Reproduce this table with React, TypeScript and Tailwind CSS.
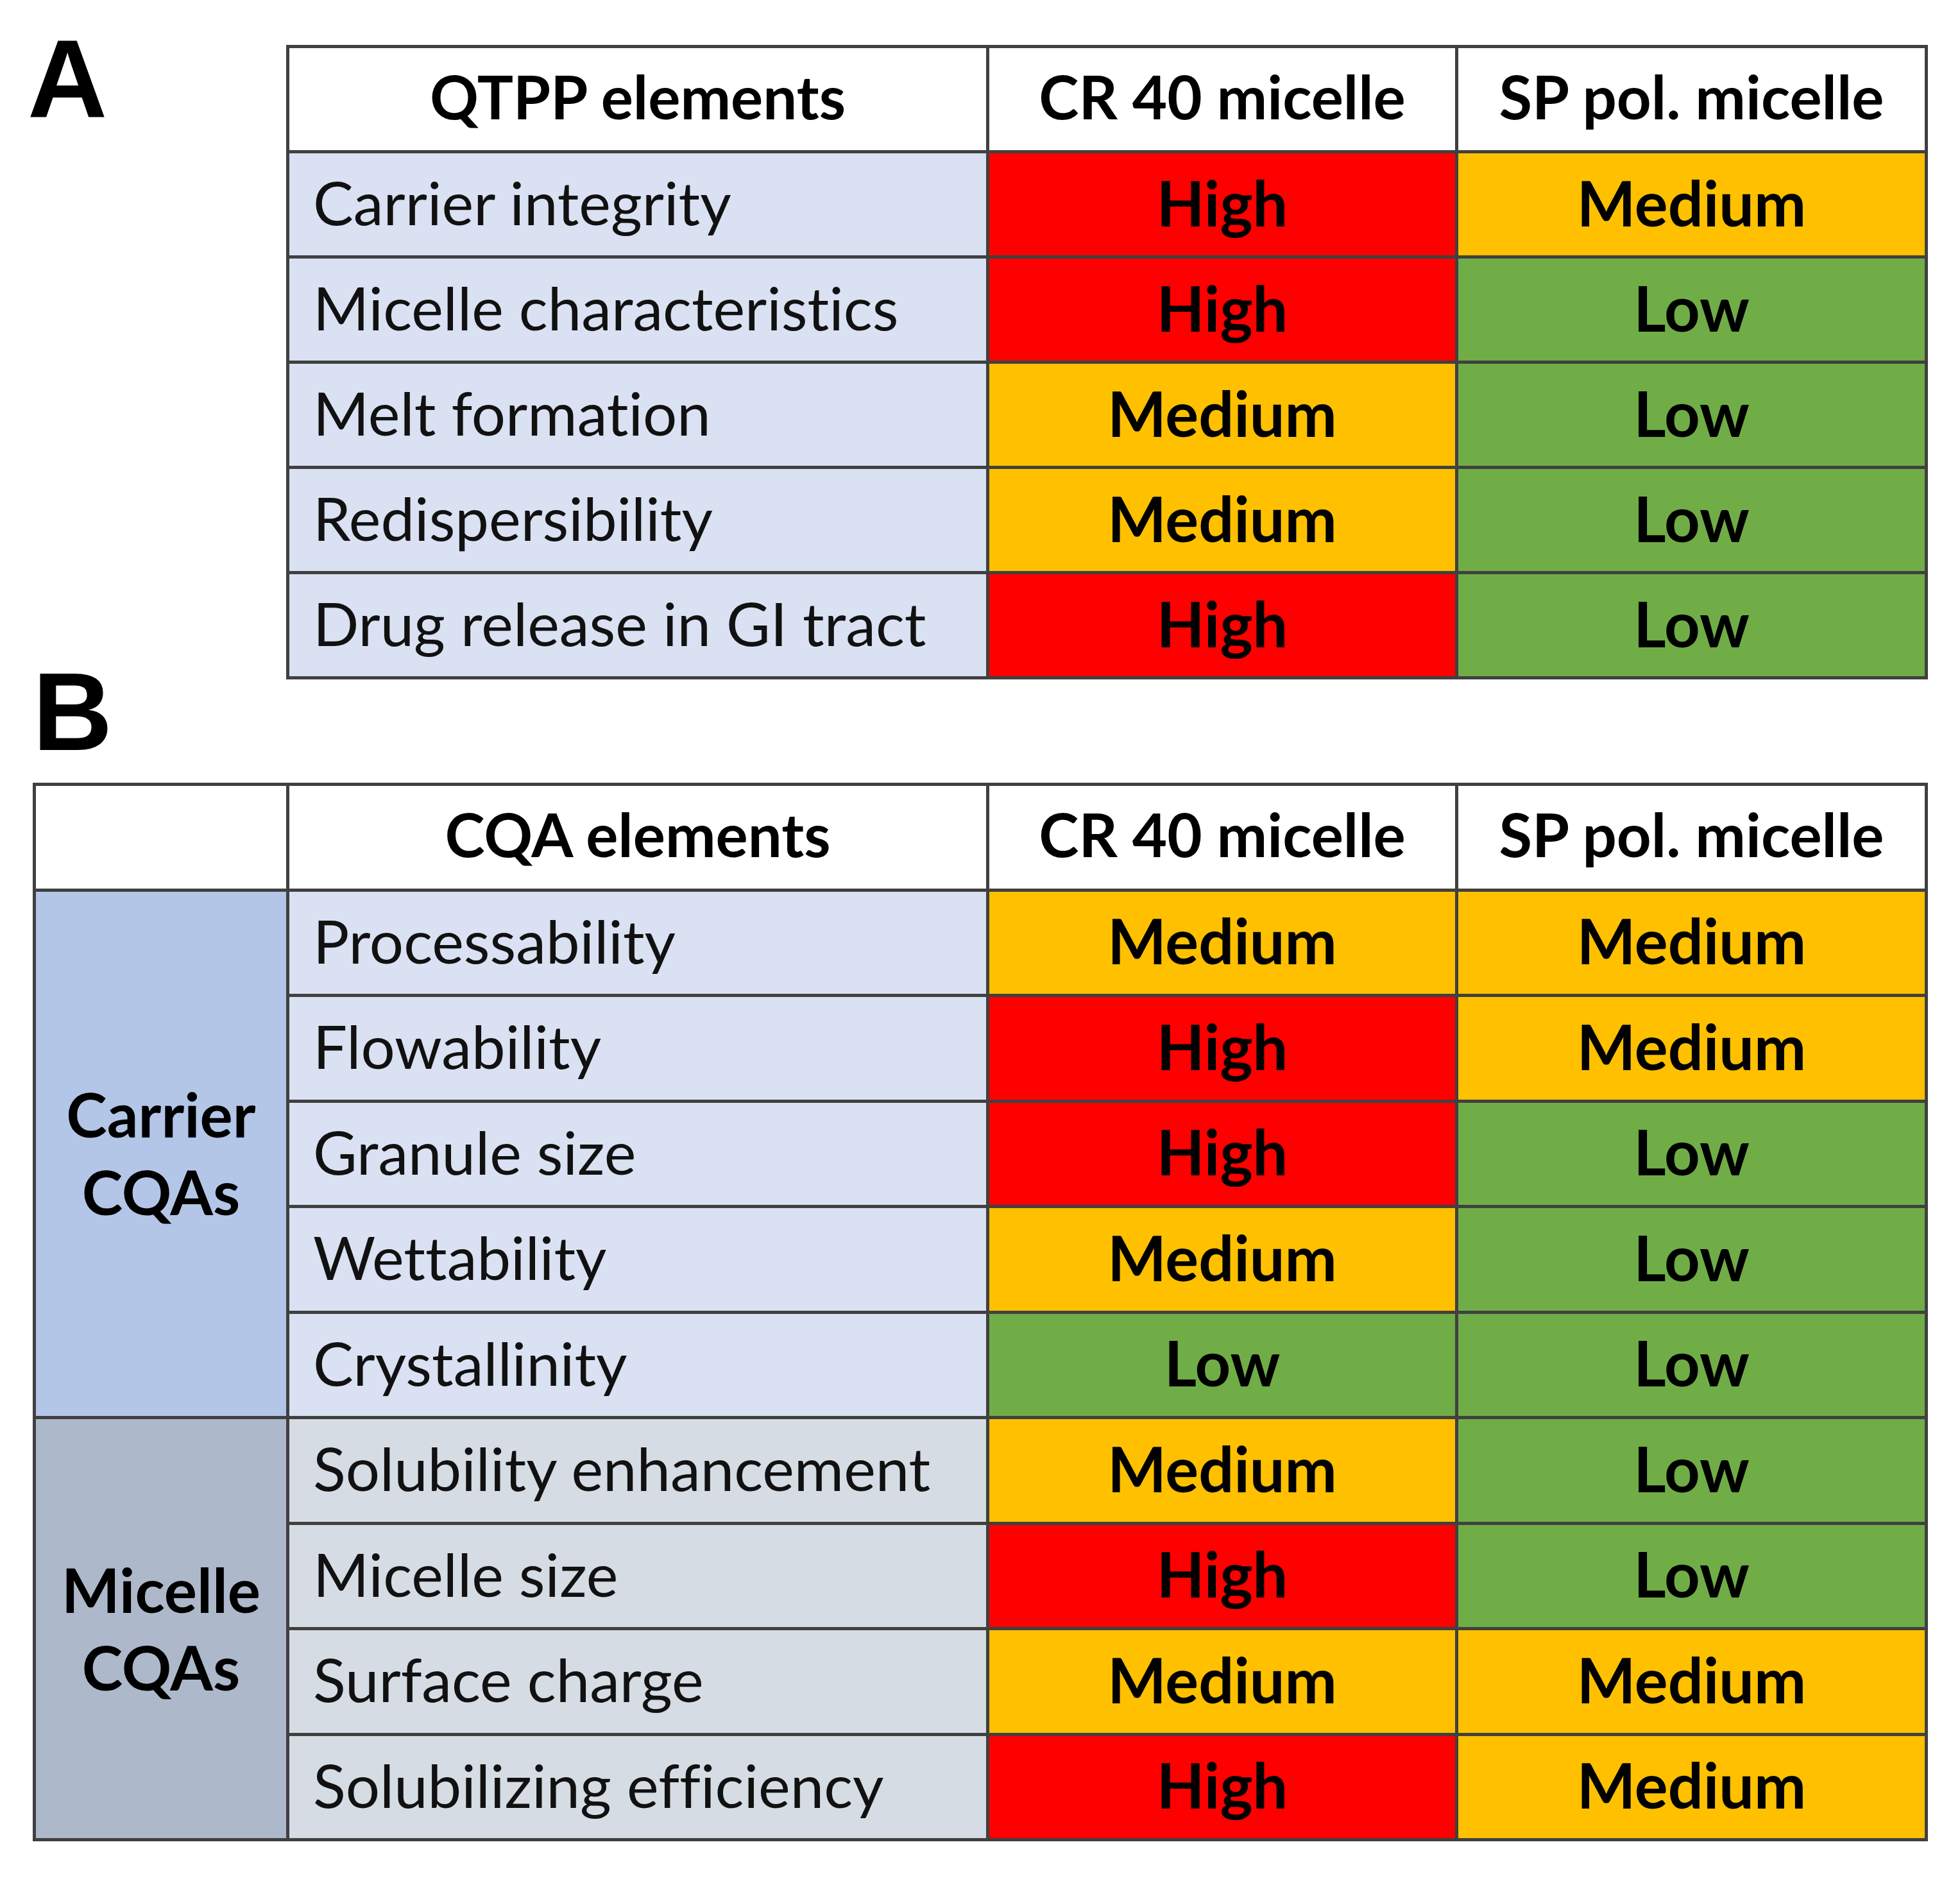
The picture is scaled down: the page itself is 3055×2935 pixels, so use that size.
const RED = 'bg-[#ff0000]';
const AMBER = 'bg-[#ffc000]';
const GREEN = 'bg-[#70ad47]';

const LEVEL: Record<string, string> = {
  High: RED,
  Medium: AMBER,
  Low: GREEN,
};

const QTPP = [
  ['Carrier integrity', 'High', 'Medium'],
  ['Micelle characteristics', 'High', 'Low'],
  ['Melt formation', 'Medium', 'Low'],
  ['Redispersibility', 'Medium', 'Low'],
  ['Drug release in GI tract', 'High', 'Low'],
];

const CARRIER = [
  ['Processability', 'Medium', 'Medium'],
  ['Flowability', 'High', 'Medium'],
  ['Granule size', 'High', 'Low'],
  ['Wettability', 'Medium', 'Low'],
  ['Crystallinity', 'Low', 'Low'],
];

const MICELLE = [
  ['Solubility enhancement', 'Medium', 'Low'],
  ['Micelle size', 'High', 'Low'],
  ['Surface charge', 'Medium', 'Medium'],
  ['Solubilizing efficiency', 'High', 'Medium'],
];

function Head({ children }: { children?: React.ReactNode }) {
  return (
    <div className="bg-white flex items-center justify-center pb-[10px] font-bold text-black text-[94px]">
      {children}
    </div>
  );
}

function Name({ label, tone }: { label: string; tone: string }) {
  return (
    <div className={`${tone} flex items-center pl-[37px] pb-[7px] text-[#111] text-[94px] whitespace-nowrap`}>
      {label}
    </div>
  );
}

function Level({ value }: { value: string }) {
  return (
    <div className={`${LEVEL[value]} flex items-center justify-center pb-[7px] font-bold text-black text-[97px]`}>
      {value}
    </div>
  );
}

export default function App() {
  return (
    <div className="w-[3055px] h-[2935px] bg-white font-[family-name:Lato,sans-serif] leading-none [font-variant-ligatures:none]">
      {/* A */}
      <div className="flex">
        <div className="w-[446px] pl-[43px] pt-[36px]">
          <div className="font-[family-name:'Liberation_Sans',Arial,sans-serif] font-bold text-[172px] leading-none">A</div>
        </div>
        <div className="mt-[70px] grid grid-cols-[1086px_726px_727px] auto-rows-[159px] gap-[5px] p-[5px] bg-[#404040]">
          <Head>QTPP elements</Head>
          <Head>CR 40 micelle</Head>
          <Head>SP pol. micelle</Head>
          {QTPP.map(([name, cr, sp]) => (
            <div key={name} className="contents">
              <Name label={name} tone="bg-[#d9e1f2]" />
              <Level value={cr} />
              <Level value={sp} />
            </div>
          ))}
        </div>
      </div>

      {/* B */}
      <div className="-mt-[36px] pl-[51px]">
        <div className="font-[family-name:'Liberation_Sans',Arial,sans-serif] font-bold text-[172px] leading-none">B</div>
      </div>
      <div className="mt-[25px] ml-[51px] w-fit grid grid-cols-[390px_1086px_726px_727px] auto-rows-[159.5px] gap-[5px] p-[5px] bg-[#404040]">
        <Head />
        <Head>CQA elements</Head>
        <Head>CR 40 micelle</Head>
        <Head>SP pol. micelle</Head>

        <div className="row-span-5 bg-[#b4c6e7] flex flex-col items-center justify-center pb-[4px] font-bold text-black text-[96px] leading-[121px]">
          <span>Carrier</span>
          <span>CQAs</span>
        </div>
        {CARRIER.map(([name, cr, sp]) => (
          <div key={name} className="contents">
            <Name label={name} tone="bg-[#d9e1f2]" />
            <Level value={cr} />
            <Level value={sp} />
          </div>
        ))}

        <div className="row-span-4 bg-[#adb9ca] flex flex-col items-center justify-center pb-[4px] font-bold text-black text-[96px] leading-[121px]">
          <span>Micelle</span>
          <span>CQAs</span>
        </div>
        {MICELLE.map(([name, cr, sp]) => (
          <div key={name} className="contents">
            <Name label={name} tone="bg-[#d6dce4]" />
            <Level value={cr} />
            <Level value={sp} />
          </div>
        ))}
      </div>
    </div>
  );
}
